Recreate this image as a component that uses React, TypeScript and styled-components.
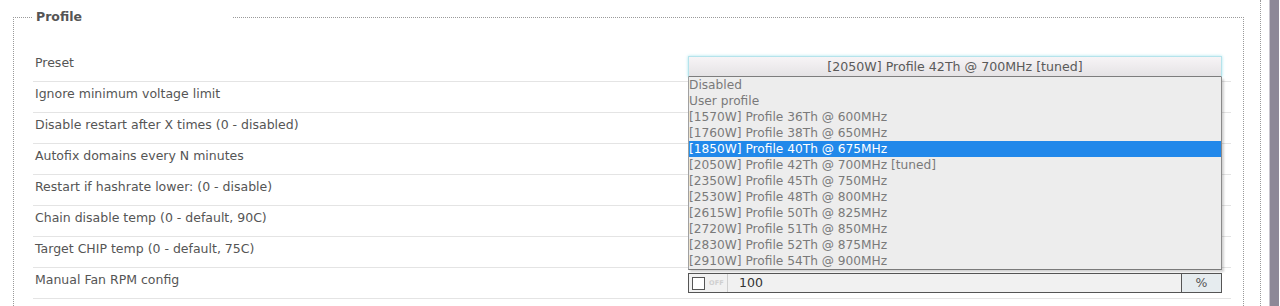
import React from "react";
import styled, { createGlobalStyle } from "styled-components";

const Global = createGlobalStyle`
  html, body { margin: 0; padding: 0; background: #fff; }
  body { height: 306px; overflow: hidden; font-family: "DejaVu Sans", Verdana, sans-serif; }
`;

const Page = styled.div`
  display: flex;
  height: 306px;
  overflow: hidden;
`;

const Main = styled.div`
  width: 1261px;
  border-right: 1px dotted #9a9a9a;
  padding-left: 13px;
  box-sizing: border-box;
`;

const Gap = styled.div`
  width: 8px;
`;

const Scrollbar = styled.div`
  width: 9px;
  background: #8d8897;
  border-left: 1px solid #c9c6cf;
`;

const Fieldset = styled.fieldset`
  width: 1231px;
  box-sizing: border-box;
  margin: 8px 0 0 0;
  padding: 25px 12px 0 19px;
  border: 1px dotted #9a9a9a;
  min-height: 400px;
`;

const Legend = styled.legend`
  font-family: "DejaVu Sans", Verdana, sans-serif;
  font-weight: bold;
  font-size: 12.5px;
  line-height: 18px;
  color: #555;
  padding: 0 0 0 3px;
  margin-left: 0;
  width: 199px;
  box-sizing: border-box;
  background: #fff;
`;

const Row = styled.div`
  display: grid;
  grid-template-columns: 655px 534px;
  height: 30px;
  border-bottom: 1px solid #e4e4e4;
  box-sizing: content-box;
`;

const Label = styled.div`
  padding: 4px 0 0 2px;
  font-size: 12.5px;
  line-height: 16px;
  color: #555;
`;

const Control = styled.div`
  position: relative;
  padding-top: 5px;
`;

const Select = styled.div`
  height: 21px;
  box-sizing: border-box;
  border: 1px solid #b5e3eb;
  border-bottom: 1px solid #7d7d7d;
  box-shadow: 0 0 3px #a8e4ee;
  background: linear-gradient(#f7f4f6, #e5e3e5);
  font-size: 12.6px;
  line-height: 19px;
  color: #5a5a5a;
  text-align: center;
`;

const List = styled.ul`
  position: absolute;
  left: 0;
  top: 26px;
  width: 534px;
  box-sizing: border-box;
  margin: 0;
  padding: 0;
  list-style: none;
  background: #ededed;
  border-left: 1px solid #a0a0a0;
  border-right: 1px solid #8a8a8a;
  border-bottom: 1px solid #7a7a7a;
  box-shadow: 2px 2px 2px rgba(0, 0, 0, 0.18);
  z-index: 2;
`;

const Item = styled.li<{ $active?: boolean }>`
  height: 16px;
  line-height: 16px;
  font-size: 12.2px;
  padding-left: 0;
  white-space: nowrap;
  color: ${(p) => (p.$active ? "#fff" : "#7a7a7a")};
  background: ${(p) => (p.$active ? "#2188ea" : "transparent")};
`;

const InputGroup = styled.div`
  display: flex;
  height: 20px;
  box-sizing: border-box;
  border: 1px solid #555;
  background: #f1f1f1;
`;

const Toggle = styled.div`
  display: flex;
  align-items: center;
  width: 39px;
  box-sizing: border-box;
  border-right: 1px solid #cfcfcf;
  padding-left: 3px;
  gap: 4px;
`;

const Check = styled.span`
  width: 13px;
  height: 13px;
  box-sizing: border-box;
  border: 1px solid #555;
  background: #fff;
`;

const Off = styled.span`
  font-size: 6.5px;
  font-weight: bold;
  color: #cfcfcf;
  letter-spacing: 0.2px;
`;

const Value = styled.div`
  flex: 1;
  padding-left: 11px;
  font-size: 12.5px;
  line-height: 18px;
  color: #333;
`;

const Addon = styled.div`
  width: 40px;
  box-sizing: border-box;
  border-left: 1px solid #555;
  background: #e6ecef;
  font-size: 12.5px;
  line-height: 18px;
  text-align: center;
  color: #555;
`;

const options = [
  "Disabled",
  "User profile",
  "[1570W] Profile 36Th @ 600MHz",
  "[1760W] Profile 38Th @ 650MHz",
  "[1850W] Profile 40Th @ 675MHz",
  "[2050W] Profile 42Th @ 700MHz [tuned]",
  "[2350W] Profile 45Th @ 750MHz",
  "[2530W] Profile 48Th @ 800MHz",
  "[2615W] Profile 50Th @ 825MHz",
  "[2720W] Profile 51Th @ 850MHz",
  "[2830W] Profile 52Th @ 875MHz",
  "[2910W] Profile 54Th @ 900MHz",
];

const labels = [
  "Ignore minimum voltage limit",
  "Disable restart after X times (0 - disabled)",
  "Autofix domains every N minutes",
  "Restart if hashrate lower: (0 - disable)",
  "Chain disable temp (0 - default, 90C)",
  "Target CHIP temp (0 - default, 75C)",
];

export default function App() {
  return (
    <>
      <Global />
      <Page>
        <Main>
          <Fieldset>
            <Legend>Profile</Legend>
            <Row>
              <Label>Preset</Label>
              <Control>
                <Select>[2050W] Profile 42Th @ 700MHz [tuned]</Select>
                <List>
                  {options.map((o, i) => (
                    <Item key={o} $active={i === 4}>
                      {o}
                    </Item>
                  ))}
                </List>
              </Control>
            </Row>
            {labels.map((l) => (
              <Row key={l}>
                <Label>{l}</Label>
                <Control />
              </Row>
            ))}
            <Row>
              <Label>Manual Fan RPM config</Label>
              <Control>
                <InputGroup>
                  <Toggle>
                    <Check />
                    <Off>OFF</Off>
                  </Toggle>
                  <Value>100</Value>
                  <Addon>%</Addon>
                </InputGroup>
              </Control>
            </Row>
          </Fieldset>
        </Main>
        <Gap />
        <Scrollbar />
      </Page>
    </>
  );
}
